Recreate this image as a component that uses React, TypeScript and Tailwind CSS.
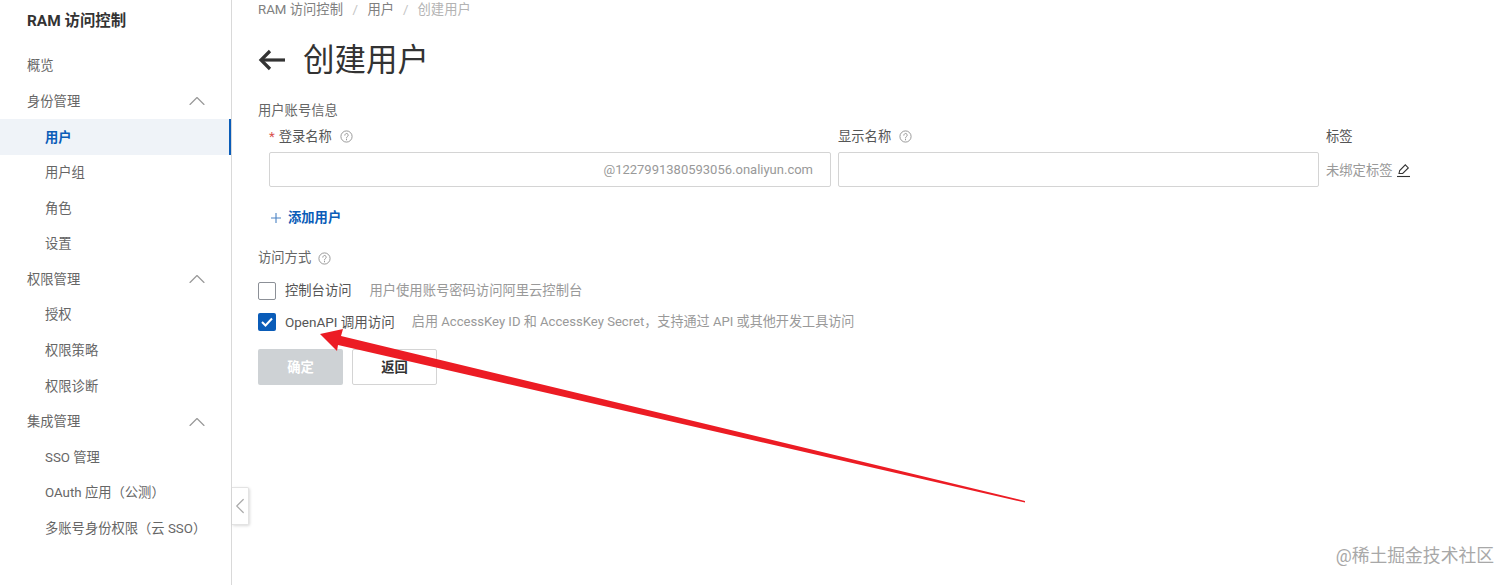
import React from "react";
import { ChevronUp, ChevronLeft } from "lucide-react";

const font = { fontFamily: 'Roboto, "Noto Sans CJK SC", sans-serif' };

function Help() {
  return (
    <svg width="13" height="13" viewBox="0 0 13 13" fill="none" stroke="#8f8f8f" strokeWidth="0.9" className="shrink-0">
      <circle cx="6.5" cy="6.5" r="5.6" />
      <path d="M4.8 5.2a1.7 1.7 0 1 1 2.6 1.4c-.6.4-.9.7-.9 1.3" strokeLinecap="round" />
      <path d="M6.5 9.3v.6" strokeLinecap="round" />
    </svg>
  );
}

function Group({ label }: { label: string }) {
  return (
    <div className="h-[35.6px] pl-[27px] pr-[20px] flex items-center justify-between text-[#666]">
      <span className="pt-[1px]">{label}</span>
      <ChevronUp size={28} strokeWidth={1} color="#999" />
    </div>
  );
}

function Item({ label, active }: { label: string; active?: boolean }) {
  return (
    <div
      className={
        active
          ? "h-[35.6px] pl-[45px] pt-[1px] flex items-center bg-[#eff3f8] text-[#0a5cb8] font-bold border-r-2 border-[#0a5cb8]"
          : "h-[35.6px] pl-[45px] pt-[1px] flex items-center text-[#666]"
      }
    >
      {label}
    </div>
  );
}

export default function App() {
  return (
    <div className="relative flex h-[585px] w-[1512px] overflow-hidden bg-white text-[13.3px]" style={font}>
      <aside className="w-[232px] shrink-0 border-r border-[#d9d9d9]">
        <div className="h-[48px] pl-[27px] pb-[5px] flex items-center text-[15.4px] font-bold text-[#333]">RAM 访问控制</div>
        <div className="h-[35.6px] pl-[27px] pt-[1px] flex items-center text-[#666]">概览</div>
        <Group label="身份管理" />
        <Item label="用户" active />
        <Item label="用户组" />
        <Item label="角色" />
        <Item label="设置" />
        <Group label="权限管理" />
        <Item label="授权" />
        <Item label="权限策略" />
        <Item label="权限诊断" />
        <Group label="集成管理" />
        <Item label="SSO 管理" />
        <Item label="OAuth 应用（公测）" />
        <Item label="多账号身份权限（云 SSO）" />
      </aside>

      <button className="absolute left-[232px] top-[487px] w-[17px] h-[38px] bg-white border border-[#e3e3e3] border-l-0 shadow-[1px_1px_3px_rgba(0,0,0,0.15)] rounded-r-[2px] flex items-center justify-center overflow-hidden">
        <ChevronLeft size={26} strokeWidth={1.1} color="#aaa" className="shrink-0" />
      </button>

      <main className="pl-[26px] flex-1">
        <div className="h-[20px] flex items-center text-[#808080]">
          <span>RAM 访问控制</span>
          <span className="mx-[9.5px] text-[#c4c4c4]">/</span>
          <span>用户</span>
          <span className="mx-[9px] text-[#c4c4c4]">/</span>
          <span className="text-[#b3b3b3]">创建用户</span>
        </div>

        <div className="mt-[20px] h-[40px] flex items-center">
          <svg width="28" height="24" viewBox="0 0 28 24" fill="none" stroke="#333" strokeWidth="3.2" className="shrink-0">
            <path d="M27 12H3" />
            <path d="M12 3l-9 9 9 9" />
          </svg>
          <span className="ml-[17px] pt-[2px] text-[31.5px] text-[#333] leading-none">创建用户</span>
        </div>

        <div className="mt-[21px] h-[20px] flex items-center text-[#666]">用户账号信息</div>

        <div className="mt-[5px] flex">
          <div className="ml-[11px] w-[562px] shrink-0">
            <div className="h-[20px] pt-[1px] flex items-center text-[#555]">
              <span className="text-[#d9534f] mr-[4px]">*</span>
              <span>登录名称</span>
              <span className="ml-[8px]"><Help /></span>
            </div>
            <div className="mt-[6px] h-[35px] border border-[#d4d4d4] rounded-[2px] flex items-center justify-end pr-[17px] text-[13px] text-[#999]">
              <span className="pt-[1px]">@1227991380593056.onaliyun.com</span>
            </div>
          </div>
          <div className="ml-[7px] w-[481px] shrink-0">
            <div className="h-[20px] pt-[1px] flex items-center text-[#555]">
              <span>显示名称</span>
              <span className="ml-[8px]"><Help /></span>
            </div>
            <div className="mt-[6px] h-[35px] border border-[#d4d4d4] rounded-[2px]" />
          </div>
          <div className="ml-[7px]">
            <div className="h-[20px] pt-[1px] flex items-center text-[#555]">标签</div>
            <div className="mt-[6px] h-[35px] pt-[2px] flex items-center text-[#999]">
              <span>未绑定标签</span>
              <svg width="15" height="15" viewBox="0 0 15 15" fill="none" stroke="#333" strokeWidth="1.1" className="ml-[4px]">
                <path d="M3 10.5l.7-3 5.6-5.6 3 3-5.6 5.6z" />
                <path d="M1 13.5h13" />
              </svg>
            </div>
          </div>
        </div>

        <div className="mt-[21px] ml-[12px] h-[20px] flex items-center text-[#0a5cb8] font-bold">
          <svg width="12" height="12" viewBox="0 0 12 12" stroke="#4a82c4" strokeWidth="1.1" className="mr-[6px]">
            <path d="M6 1v10M1 6h10" />
          </svg>
          添加用户
        </div>

        <div className="mt-[20px] h-[20px] flex items-center text-[#666]">
          <span>访问方式</span>
          <span className="ml-[7px]"><Help /></span>
        </div>

        <div className="mt-[14px] h-[18px] flex items-center">
          <span className="w-[18px] h-[18px] border border-[#8c9097] rounded-[2px] bg-white shrink-0" />
          <span className="ml-[9px] text-[#555]">控制台访问</span>
          <span className="ml-[18px] text-[#999]">用户使用账号密码访问阿里云控制台</span>
        </div>

        <div className="mt-[13px] h-[18px] flex items-center">
          <span className="w-[18px] h-[18px] rounded-[2px] bg-[#0a5cb8] shrink-0 flex items-center justify-center">
            <svg width="12" height="10" viewBox="0 0 12 10" fill="none" stroke="#fff" strokeWidth="2">
              <path d="M1 5l3.5 3.5L11 1.5" />
            </svg>
          </span>
          <span className="ml-[9px] text-[13.5px] text-[#555]">OpenAPI 调用访问</span>
          <span className="ml-[17px] text-[13.1px] text-[#999]">启用 AccessKey ID 和 AccessKey Secret，支持通过 API 或其他开发工具访问</span>
        </div>

        <div className="mt-[18px] flex gap-[9px]">
          <button className="w-[85px] h-[36px] pt-[2px] bg-[#ced2d5] rounded-[2px] text-white font-bold">确定</button>
          <button className="w-[85px] h-[36px] pt-[1px] border border-[#d4d4d4] rounded-[2px] text-[#333] font-bold bg-white">返回</button>
        </div>
      </main>

      <svg className="absolute left-0 top-0 pointer-events-none" width="1512" height="585" viewBox="0 0 1512 585" fill="#ec1c24">
        <path d="M320 334L343 329L341 336L1025 501L1025 502.5L338 345L337 351z" />
      </svg>

      <div className="absolute right-[18px] top-[544px] text-[17.8px] leading-[24px] text-[#a8a8a8]">@稀土掘金技术社区</div>
    </div>
  );
}
